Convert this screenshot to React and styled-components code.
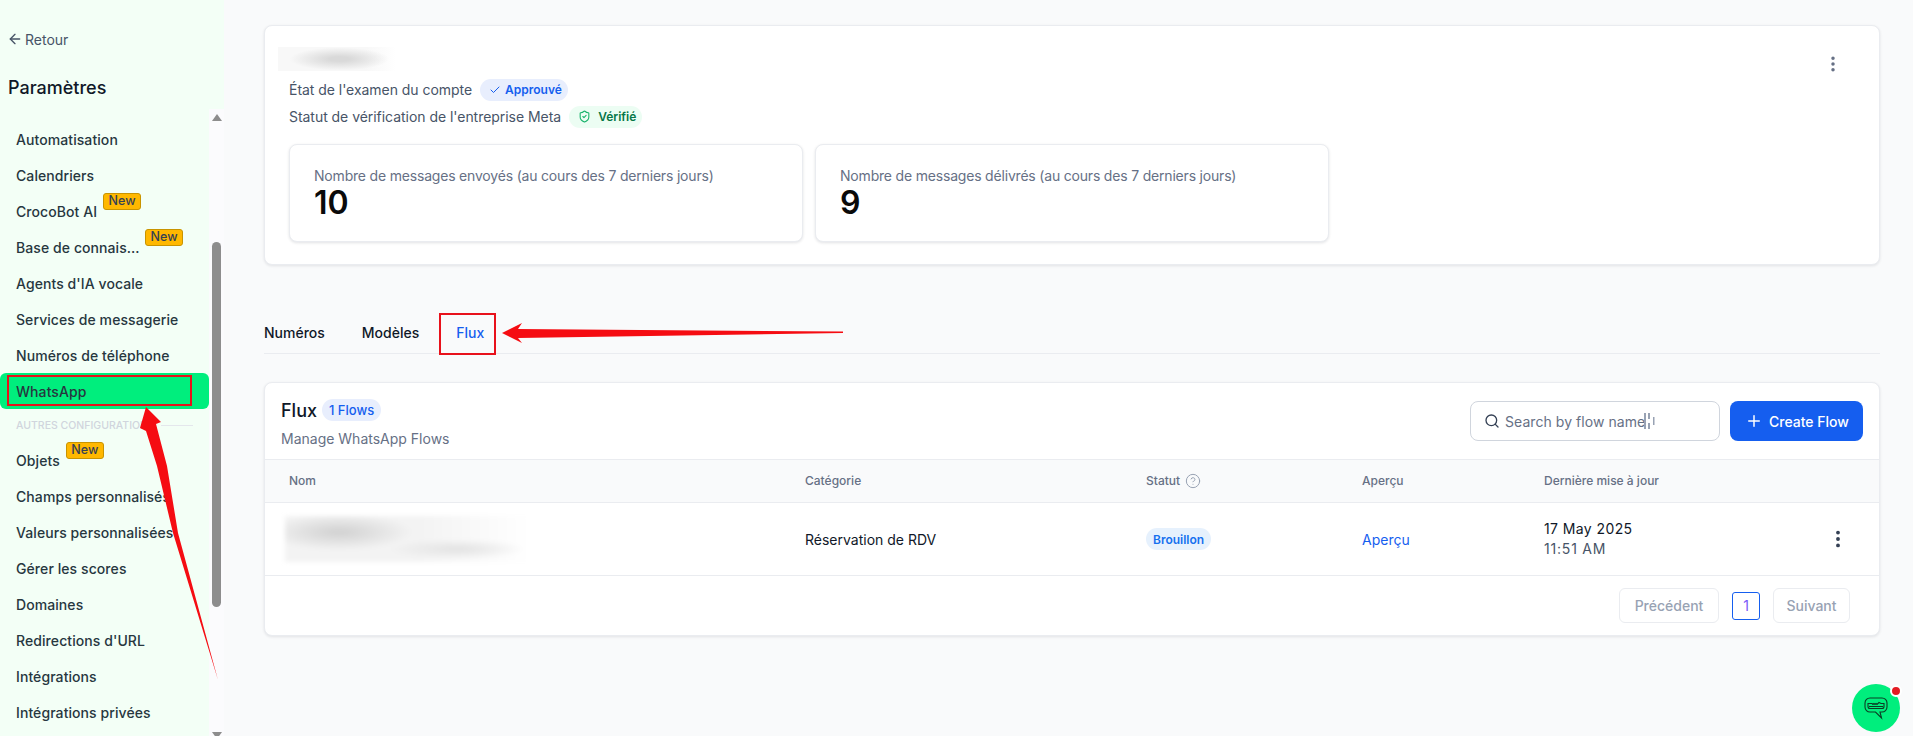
import React from 'react';
import styled, { createGlobalStyle } from 'styled-components';
import {
  ArrowLeft,
  Check,
  ShieldCheck,
  Search,
  Plus,
  CircleHelp,
  EllipsisVertical,
} from 'lucide-react';

const GlobalStyle = createGlobalStyle`
  html, body {
    margin: 0;
    padding: 0;
    height: 100%;
    overflow: hidden;
    background: #f9fafb;
    font-family: Inter, "Noto Sans", "Liberation Sans", sans-serif;
    color: #101828;
  }
  * { box-sizing: border-box; }
`;

const Page = styled.div`
  position: relative;
  display: flex;
  width: 1913px;
  height: 736px;
  overflow: hidden;
`;

/* sidebar */
const Sidebar = styled.aside`
  width: 224px;
  flex: none;
  display: flex;
  flex-direction: column;
  background: #f3fff6;
`;

const BackLink = styled.div`
  display: flex;
  align-items: center;
  gap: 2px;
  height: 20px;
  margin: 29px 0 0 7px;
  font-size: 14px;
  color: #475467;
`;

const SideTitle = styled.h2`
  margin: 27px 0 0 8px;
  height: 24px;
  font-size: 18px;
  line-height: 24px;
  font-weight: 500;
  color: #101828;
`;

const SideBody = styled.div`
  flex: 1;
  min-height: 0;
  margin-top: 9px;
  display: flex;
`;

const SideList = styled.nav`
  flex: 1;
  padding-top: 12px;
`;

const SideItem = styled.div`
  display: flex;
  align-items: center;
  height: 36px;
  padding-left: 16px;
  font-size: 14px;
  font-weight: 500;
  letter-spacing: 0.08px;
  color: #27373f;
  border-radius: ${p => (p.$active ? '6px' : '0')};
  background: ${p => (p.$active ? '#00ee7d' : 'transparent')};
`;

const ItemLabel = styled.span`
  display: block;
  flex: none;
  white-space: nowrap;
  width: ${p => p.$width || 'auto'};
`;

const NewBadge = styled.span`
  align-self: flex-start;
  flex: none;
  width: 38px;
  height: 17px;
  margin-left: ${p => p.$gap}px;
  border: 1px solid #c99400;
  border-radius: 3px;
  background: #ffb800;
  color: #344054;
  font-size: 12.5px;
  line-height: 14px;
  font-weight: 500;
  text-align: center;
`;

const SideSection = styled.div`
  display: flex;
  align-items: center;
  gap: 6px;
  height: 33px;
  padding: 0 16px;
  color: #d0d5dd;
  font-size: 10.5px;
  font-weight: 500;
  white-space: nowrap;
  &::after {
    content: '';
    flex: 1;
    height: 1px;
    background: #e4e7ec;
  }
`;

const ScrollTrack = styled.div`
  width: 15px;
  flex: none;
  display: flex;
  flex-direction: column;
  align-items: center;
  background: #fbfbfd;
  padding-top: 5px;
`;

const ScrollArrow = styled.span`
  flex: none;
  width: 0;
  height: 0;
  border-left: 5px solid transparent;
  border-right: 5px solid transparent;
  border-${p => (p.$down ? 'top' : 'bottom')}: 7px solid #8d8d8d;
`;

const ScrollThumb = styled.div`
  flex: none;
  width: 9px;
  height: 365px;
  margin: 121px 0 125px;
  border-radius: 5px;
  background: #8d8d8d;
`;

/* main */
const Main = styled.main`
  flex: 1;
  min-width: 0;
  padding: 25px 33px 0 40px;
`;

const Card = styled.section`
  background: #fff;
  border: 1px solid #eaecf0;
  border-radius: 8px;
  box-shadow: 0 1px 3px rgba(16, 24, 40, 0.1);
`;

const AccountCard = styled(Card)`
  position: relative;
  height: 240px;
  padding: 21px 24px 0 24px;
`;

const BlurredName = styled.div`
  width: 118px;
  height: 24px;
  margin: 0 0 5px -11px;
  background:
    radial-gradient(ellipse 42% 48% at 52% 50%, #d9d9d9 20%, rgba(244, 244, 244, 0) 100%),
    linear-gradient(90deg, #f8f8f8 75%, #fff 100%);
`;

const StatusLine = styled.div`
  display: flex;
  align-items: center;
  gap: 8px;
  height: 27px;
  font-size: 14px;
  letter-spacing: -0.04px;
  color: #475467;
  white-space: nowrap;
`;

const Pill = styled.span`
  display: inline-flex;
  align-items: center;
  gap: ${p => p.$gap || 4}px;
  height: 22px;
  padding: 0 6px 0 ${p => p.$left || 9}px;
  border-radius: 11px;
  font-size: 12px;
  font-weight: 600;
  letter-spacing: 0;
  color: ${p => p.$color};
  background: ${p => p.$bg};
`;

const StatRow = styled.div`
  display: flex;
  gap: 12px;
  margin-top: 14px;
`;

const StatCard = styled.div`
  width: 514px;
  height: 98px;
  padding: 22px 24px 0;
  border: 1px solid #eaecf0;
  border-radius: 8px;
  box-shadow: 0 1px 3px rgba(16, 24, 40, 0.12);
  background: #fff;
`;

const StatLabel = styled.div`
  font-size: 14px;
  line-height: 18px;
  letter-spacing: -0.19px;
  color: #667085;
  white-space: nowrap;
`;

const StatValue = styled.div`
  font-size: 32px;
  line-height: 36px;
  font-weight: 600;
  color: #0a0a0a;
`;

const CardMenu = styled.span`
  position: absolute;
  top: 28px;
  right: 36px;
  color: #667085;
  display: flex;
`;

const Tabs = styled.div`
  display: flex;
  height: 50px;
  margin-top: 39px;
  border-bottom: 1px solid #eaecf0;
  gap: 37px;
  align-items: center;
  padding-top: 8px;
`;

const Tab = styled.span`
  font-size: 14px;
  font-weight: 500;
  color: ${p => (p.$active ? '#155eef' : '#101828')};
`;

const FlowCard = styled(Card)`
  height: 254px;
  margin-top: 28px;
  display: flex;
  flex-direction: column;
`;

const FlowHead = styled.div`
  height: 76px;
  flex: none;
  display: flex;
  justify-content: space-between;
  padding: 16px 16px 0 16px;
`;

const TitleRow = styled.div`
  display: flex;
  align-items: center;
  gap: 5px;
  height: 22px;
`;

const FlowTitle = styled.h3`
  margin: 0;
  font-size: 18px;
  font-weight: 500;
  color: #101828;
`;

const CountPill = styled.span`
  display: inline-flex;
  align-items: center;
  height: 22px;
  padding: 0 7px;
  border-radius: 11px;
  background: #e8eefd;
  color: #155eef;
  font-size: 13px;
  font-weight: 500;
  white-space: nowrap;
`;

const FlowSub = styled.div`
  margin-top: 9px;
  font-size: 14px;
  line-height: 18px;
  color: #667085;
`;

const HeadActions = styled.div`
  display: flex;
  gap: 10px;
  height: 40px;
  margin-top: 2px;
`;

const SearchBox = styled.div`
  display: flex;
  align-items: center;
  gap: 5px;
  width: 250px;
  padding-left: 13px;
  border: 1px solid #d0d5dd;
  border-radius: 8px;
  font-size: 14px;
  letter-spacing: 0.06px;
  color: #667085;
  background: #fff;
`;

const SearchCaret = styled.svg`
  margin-left: -7px;
`;

const CreateButton = styled.button`
  display: flex;
  align-items: center;
  gap: 6px;
  width: 133px;
  padding: 0 0 0 15px;
  border: 0;
  border-radius: 8px;
  background: #155eef;
  color: #fff;
  font: 500 14px Inter, "Liberation Sans", sans-serif;
`;

const TableRow = styled.div`
  display: grid;
  grid-template-columns: 516px 341px 216px 182px 1fr 22px;
  align-items: center;
  padding: ${p => (p.$head ? '0 30px 1px 24px' : '0 30px 0 24px')};
  height: ${p => p.$h}px;
  flex: none;
  border-top: 1px solid #eaecf0;
  background: ${p => (p.$head ? '#f9fafb' : '#fff')};
`;

const HeadCell = styled.div`
  display: flex;
  align-items: center;
  gap: 5px;
  font-size: 12px;
  font-weight: 500;
  color: #667085;
`;

const BodyCell = styled.div`
  font-size: 14px;
  color: #101828;
`;

const BlurredFlow = styled.div`
  width: 245px;
  height: 46px;
  margin-left: -4px;
  background:
    radial-gradient(ellipse 30% 40% at 22% 35%, #d4d4d4 10%, rgba(240, 240, 240, 0) 100%),
    radial-gradient(ellipse 28% 22% at 70% 72%, #e4e4e4 10%, rgba(245, 245, 245, 0) 100%),
    linear-gradient(90deg, #f3f3f3 55%, #fff 100%);
  filter: blur(2px);
`;

const DraftPill = styled.span`
  display: inline-flex;
  align-items: center;
  height: 22px;
  padding: 0 7px;
  border-radius: 11px;
  background: #e6f1fd;
  color: #1570ef;
  font-size: 12px;
  font-weight: 600;
`;

const PreviewLink = styled.a`
  font-size: 14px;
  color: #155eef;
`;

const DateCell = styled.div`
  font-size: 14px;
  line-height: 20px;
  letter-spacing: 0.4px;
`;

const DateTime = styled.div`
  color: #475467;
  letter-spacing: 0.8px;
`;

const RowMenu = styled.div`
  display: flex;
  color: #344054;
`;

const Pager = styled.div`
  flex: 1;
  display: flex;
  align-items: center;
  justify-content: flex-end;
  gap: 13px;
  padding: 0 29px 0 0;
  border-top: 1px solid #eaecf0;
`;

const PageButton = styled.span`
  display: flex;
  align-items: center;
  justify-content: center;
  width: ${p => p.$w}px;
  height: 35px;
  border: 1px solid #eaecf0;
  border-radius: 6px;
  color: #98a2b3;
  font-size: 14px;
  font-weight: 500;
`;

const PageNumber = styled.span`
  display: flex;
  align-items: center;
  justify-content: center;
  width: 28px;
  height: 28px;
  border: 1px solid #155eef;
  border-radius: 3px;
  color: #7a5af8;
  font-size: 14px;
`;

/* floating bits */
const Fab = styled.div`
  position: absolute;
  left: 1852px;
  top: 684px;
  width: 48px;
  height: 48px;
  border-radius: 50%;
  background: #00ee7d;
  display: flex;
  align-items: center;
  justify-content: center;
`;

const FabDot = styled.span`
  position: absolute;
  top: 1px;
  right: -2px;
  width: 12px;
  height: 12px;
  border-radius: 50%;
  background: #e31b23;
  border: 2px solid #fff;
`;

const Annotations = styled.svg`
  position: absolute;
  left: 0;
  top: 0;
  pointer-events: none;
`;

const SIDE_TOP = [
  { label: 'Automatisation' },
  { label: 'Calendriers' },
  { label: 'CrocoBot AI', gap: 6 },
  { label: 'Base de connais…', width: '119px', gap: 10 },
  { label: "Agents d'IA vocale" },
  { label: 'Services de messagerie' },
  { label: 'Numéros de téléphone' },
];

const SIDE_BOTTOM = [
  { label: 'Objets', gap: 6 },
  { label: 'Champs personnalisés' },
  { label: 'Valeurs personnalisées' },
  { label: 'Gérer les scores' },
  { label: 'Domaines' },
  { label: "Redirections d'URL" },
  { label: 'Intégrations' },
  { label: 'Intégrations privées' },
];

const renderItem = item => (
  <SideItem key={item.label}>
    <ItemLabel $width={item.width}>{item.label}</ItemLabel>
    {item.gap && <NewBadge $gap={item.gap}>New</NewBadge>}
  </SideItem>
);

const App = () => (
  <Page>
    <GlobalStyle />
    <Sidebar>
      <BackLink>
        <ArrowLeft size={16} strokeWidth={2} />
        Retour
      </BackLink>
      <SideTitle>Paramètres</SideTitle>
      <SideBody>
        <SideList>
          {SIDE_TOP.map(renderItem)}
          <SideItem $active>WhatsApp</SideItem>
          <SideSection>AUTRES CONFIGURATIONS</SideSection>
          {SIDE_BOTTOM.map(renderItem)}
        </SideList>
        <ScrollTrack>
          <ScrollArrow />
          <ScrollThumb />
          <ScrollArrow $down />
        </ScrollTrack>
      </SideBody>
    </Sidebar>

    <Main>
      <AccountCard>
        <BlurredName />
        <StatusLine>
          État de l'examen du compte
          <Pill $color="#155eef" $bg="#e8eefd">
            <Check size={12} strokeWidth={2} />
            Approuvé
          </Pill>
        </StatusLine>
        <StatusLine>
          Statut de vérification de l'entreprise Meta
          <Pill $color="#067647" $bg="#ecfdf3" $gap={7}>
            <ShieldCheck size={13} strokeWidth={2} color="#17b26a" />
            Vérifié
          </Pill>
        </StatusLine>
        <StatRow>
          <StatCard>
            <StatLabel>Nombre de messages envoyés (au cours des 7 derniers jours)</StatLabel>
            <StatValue>10</StatValue>
          </StatCard>
          <StatCard>
            <StatLabel>Nombre de messages délivrés (au cours des 7 derniers jours)</StatLabel>
            <StatValue>9</StatValue>
          </StatCard>
        </StatRow>
        <CardMenu>
          <EllipsisVertical size={20} strokeWidth={2.2} />
        </CardMenu>
      </AccountCard>

      <Tabs>
        <Tab>Numéros</Tab>
        <Tab>Modèles</Tab>
        <Tab $active>Flux</Tab>
      </Tabs>

      <FlowCard>
        <FlowHead>
          <div>
            <TitleRow>
              <FlowTitle>Flux</FlowTitle>
              <CountPill>1 Flows</CountPill>
            </TitleRow>
            <FlowSub>Manage WhatsApp Flows</FlowSub>
          </div>
          <HeadActions>
            <SearchBox>
              <Search size={16} color="#344054" />
              Search by flow name
              <SearchCaret width="12" height="18" viewBox="0 0 12 18">
                <path d="M1 1h2v16H1zM5 1h2v6H5zM5 11h2v6H5zM10 5h1.5v8H10z" fill="#98a2b3" />
              </SearchCaret>
            </SearchBox>
            <CreateButton>
              <Plus size={18} />
              Create Flow
            </CreateButton>
          </HeadActions>
        </FlowHead>
        <TableRow $head $h={43}>
          <HeadCell>Nom</HeadCell>
          <HeadCell>Catégorie</HeadCell>
          <HeadCell>
            Statut
            <CircleHelp size={16} strokeWidth={1.5} color="#98a2b3" />
          </HeadCell>
          <HeadCell>Aperçu</HeadCell>
          <HeadCell>Dernière mise à jour</HeadCell>
        </TableRow>
        <TableRow $h={73}>
          <BlurredFlow />
          <BodyCell>Réservation de RDV</BodyCell>
          <div>
            <DraftPill>Brouillon</DraftPill>
          </div>
          <div>
            <PreviewLink>Aperçu</PreviewLink>
          </div>
          <DateCell>
            17 May 2025
            <DateTime>11:51 AM</DateTime>
          </DateCell>
          <RowMenu>
            <EllipsisVertical size={22} strokeWidth={2.2} />
          </RowMenu>
        </TableRow>
        <Pager>
          <PageButton $w={100}>Précédent</PageButton>
          <PageNumber>1</PageNumber>
          <PageButton $w={77}>Suivant</PageButton>
        </Pager>
      </FlowCard>
    </Main>

    <Fab>
      <svg width="24" height="24" viewBox="0 0 24 24" fill="none" stroke="#0b3d24" strokeWidth="1.1">
        <path d="M6 2h12a5 5 0 0 1 5 5v4a5 5 0 0 1-5 5h-2l1.5 6-6-6H6a5 5 0 0 1-5-5V7a5 5 0 0 1 5-5z" />
        <path d="M4 7.5h4l1 1 1-1 1 1 1-1 1 1 2-2 2 1h3v3a2 2 0 0 1-2 2H6a2 2 0 0 1-2-2zM5 10.5h14" />
      </svg>
      <FabDot />
    </Fab>

    <Annotations width="1913" height="736" viewBox="0 0 1913 736">
      <rect x="8" y="376" width="183" height="29" fill="none" stroke="#e8111b" strokeWidth="2" />
      <rect x="440" y="314" width="55" height="40" fill="none" stroke="#e8111b" strokeWidth="2" />
      <path d="M146 407 L161 422 L156 424 L167 466 L178 533 L218 680 L173 533 L157 466 L146 431 L140 428 Z" fill="#f50c12" />
      <path d="M502 333 L522 323 L518 329 L843 331.5 L843 333 L518 338 L522 343 Z" fill="#f50c12" />
    </Annotations>
  </Page>
);

export default App;
